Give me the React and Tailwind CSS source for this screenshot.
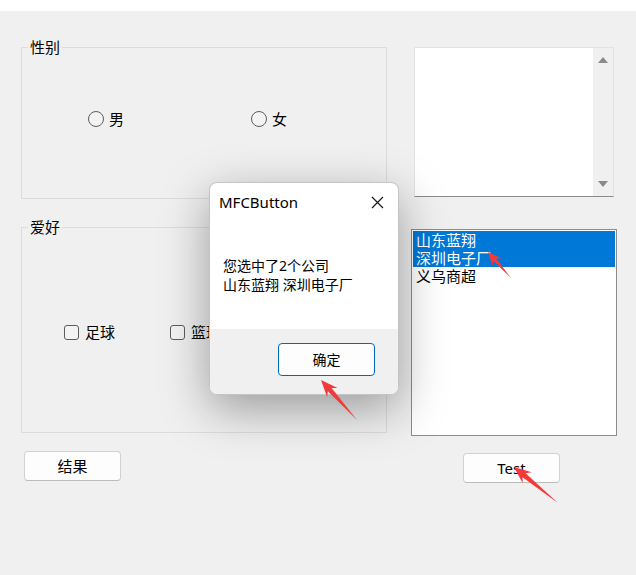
import React from "react";

const font = "font-['Noto_Sans','Noto_Sans_CJK_SC',sans-serif]";

// red pointer arrow drawn by a screenshot tool
const Arrow = ({ tip, tail, len = 17, half = 7, neck = 2.5 }) => {
  const dx = tip[0] - tail[0];
  const dy = tip[1] - tail[1];
  const d = Math.hypot(dx, dy);
  const ux = dx / d;
  const uy = dy / d;
  const nx = -uy;
  const ny = ux;
  const bx = tip[0] - ux * len;
  const by = tip[1] - uy * len;
  const nbx = bx + ux * 4;
  const nby = by + uy * 4;
  const pts = [
    [tip[0], tip[1]],
    [bx + nx * half, by + ny * half],
    [nbx + nx * neck, nby + ny * neck],
    [tail[0], tail[1]],
    [nbx - nx * neck, nby - ny * neck],
    [bx - nx * half, by - ny * half],
  ];
  return (
    <polygon
      points={pts.map((p) => p.join(",")).join(" ")}
      fill="#f33a3a"
    />
  );
};

const Radio = ({ label, className = "" }) => (
  <div className={`flex items-center ${className}`}>
    <span className="w-[16px] h-[16px] rounded-full border border-[#5c5c5c] bg-[#f3f3f3]" />
    <span className="ml-[5px] text-[15px] leading-[18px] text-black">{label}</span>
  </div>
);

const Check = ({ label, className = "" }) => (
  <div className={`flex items-center ${className}`}>
    <span className="w-[15px] h-[15px] rounded-[3px] border border-[#5c5c5c] bg-[#f3f3f3]" />
    <span className="ml-[6px] text-[15px] leading-[18px] text-black">{label}</span>
  </div>
);

const WinButton = ({ children, className = "" }) => (
  <button className={`h-[30px] w-[97px] rounded-[4px] border border-[#d1d1d1] border-b-[#bcbcbc] bg-[#fdfdfd] text-[15px] text-black flex items-center justify-center ${className}`}>
    {children}
  </button>
);

const GroupBox = ({ title, className = "", children }) => (
  <fieldset className={`border border-[#dcdcdc] ${className}`}>
    <legend className="ml-[6px] px-[2px] text-[15px] leading-[20px] text-black">
      {title}
    </legend>
    {children}
  </fieldset>
);

export default function App() {
  return (
    <div className={`relative w-[636px] h-[575px] bg-[#f0f0f0] overflow-hidden ${font}`}>
      <div className="h-[11px] bg-white" />
      <div className="flex pt-[26px]">
        {/* left column */}
        <div className="ml-[21px] w-[366px] flex flex-col">
          <GroupBox title="性别" className="h-[162px]">
            <div className="flex pt-[53px] pl-[66px]">
              <Radio label="男" />
              <Radio label="女" className="ml-[127px]" />
            </div>
          </GroupBox>
          <GroupBox title="爱好" className="h-[216px] mt-[18px]">
            <div className="flex pt-[86px] pl-[42px]">
              <Check label="足球" />
              <Check label="篮球" className="ml-[55px]" />
            </div>
          </GroupBox>
          <WinButton className="ml-[3px] mt-[18px]">结果</WinButton>
        </div>

        {/* right column */}
        <div className="ml-[24px] w-[206px] flex flex-col">
          <div className="mt-[10px] ml-[3px] w-[200px] h-[150px] bg-white border border-[#e3e3e3] border-b-[#8a8a8a] flex justify-end">
            <div className="w-[20px] h-full bg-[#f0f0f0] flex flex-col items-center justify-between py-[9px]">
              <svg width="10" height="6" viewBox="0 0 10 6">
                <polygon points="5,0 10,6 0,6" fill="#8a8a8a" />
              </svg>
              <svg width="10" height="6" viewBox="0 0 10 6">
                <polygon points="0,0 10,0 5,6" fill="#8a8a8a" />
              </svg>
            </div>
          </div>
          <div className="mt-[32px] w-[206px] h-[207px] bg-white border border-[#8c8c8c] p-px text-[15px] leading-[18px]">
            <div className="bg-[#0078d7] text-white">
              <div className="pl-[3px] h-[18px]">山东蓝翔</div>
              <div className="pl-[3px] h-[18px]">深圳电子厂</div>
            </div>
            <div className="pl-[3px] h-[18px] text-black">义乌商超</div>
          </div>
          <WinButton className="ml-[52px] mt-[17px]">Test</WinButton>
        </div>
      </div>

      {/* message box */}
      <div className="absolute left-[209px] top-[182px] w-[190px] h-[213px] bg-white rounded-[8px] border border-[#c4c4c4] shadow-[0_14px_48px_rgba(0,0,0,0.36)] overflow-hidden flex flex-col">
        <div className="h-[38px] flex items-center justify-between pl-[9px] pr-[14px]">
          <span className="text-[15px] text-black">MFCButton</span>
          <svg width="13" height="13" viewBox="0 0 13 13">
            <path d="M1 1L12 12M12 1L1 12" stroke="#1a1a1a" strokeWidth="1.2" />
          </svg>
        </div>
        <div className="flex-1 pl-[13px] pt-[35px] text-[14px] leading-[19px] text-black">
          <div>您选中了2个公司</div>
          <div>山东蓝翔 深圳电子厂</div>
        </div>
        <div className="h-[65px] bg-[#f0f0f0] flex justify-end pr-[23px] pt-[14px]">
          <button className="h-[33px] w-[97px] rounded-[4px] border border-[#0067c0] bg-[#fdfdfd] text-[14px] text-black flex items-center justify-center">
            确定
          </button>
        </div>
      </div>

      {/* annotation arrows */}
      <svg className="absolute inset-0 pointer-events-none" width="636" height="575">
        <Arrow tip={[321, 380]} tail={[357, 420]} />
        <Arrow tip={[488, 252]} tail={[511, 278]} len={14} half={6} neck={2} />
        <Arrow tip={[514, 467]} tail={[558, 503]} />
      </svg>
    </div>
  );
}
